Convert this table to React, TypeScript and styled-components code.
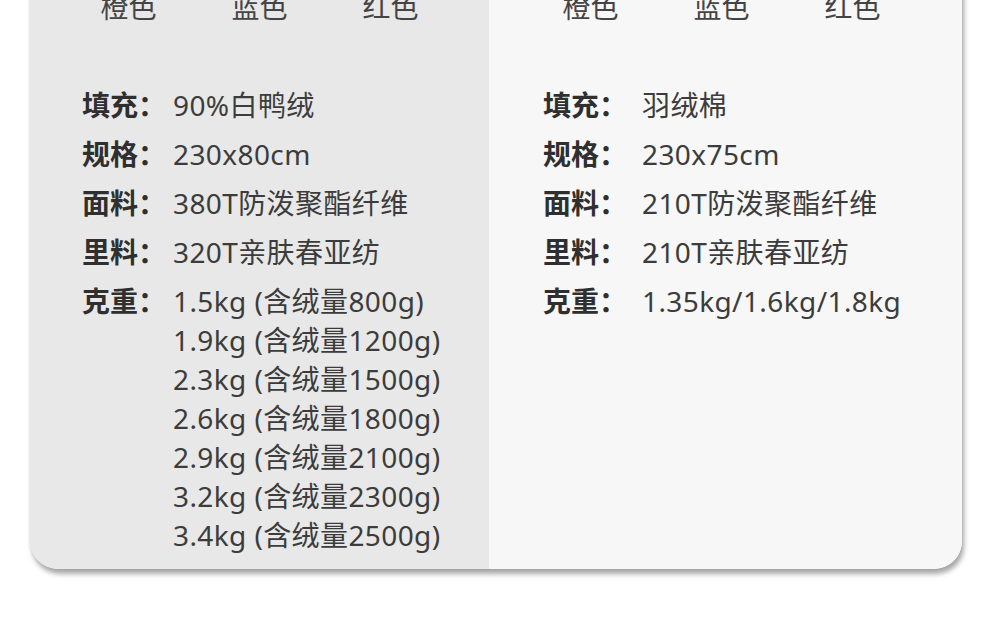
import React from "react";
import styled, { createGlobalStyle } from "styled-components";

const Global = createGlobalStyle`
  html, body { margin: 0; padding: 0; background: #ffffff; }
  body {
    width: 990px; height: 625px; overflow: hidden;
    font-family: "Noto Sans", "Noto Sans CJK SC", sans-serif;
    color: #333;
  }
`;

const Page = styled.div`
  width: 990px;
  height: 625px;
  background: #fff;
  overflow: hidden;
`;

const Card = styled.div`
  margin: -40px 0 0 30px;
  width: 932px;
  display: grid;
  grid-template-columns: 459px 473px;
  border-radius: 28px;
  overflow: hidden;
  box-shadow: 2px 5px 5px rgba(0, 0, 0, 0.34), 0 0 3px rgba(0, 0, 0, 0.08);
`;

const Panel = styled.div<{ $tone: "dark" | "light"; $indent: number }>`
  background: ${(p) => (p.$tone === "dark" ? "#e8e8e8" : "#f7f7f7")};
  padding: 28px 0 14px ${(p) => p.$indent}px;
  display: flex;
  flex-direction: column;
`;

const Colors = styled.div<{ $shift: number }>`
  display: flex;
  justify-content: center;
  gap: 73px;
  margin-left: ${(p) => p.$shift}px;
  font-size: 28px;
  line-height: 39px;
  color: #444;
`;

const ColorName = styled.span`
  width: 58px;
  text-align: center;
  white-space: nowrap;
`;

const Specs = styled.div`
  margin-top: 59px;
  display: flex;
  flex-direction: column;
  gap: 10px;
`;

const Row = styled.div`
  display: flex;
  align-items: flex-start;
  font-size: 28px;
  line-height: 39px;
`;

const Label = styled.span<{ $w: number }>`
  flex: 0 0 ${(p) => p.$w}px;
  font-weight: 700;
  color: #2f2f2f;
  white-space: nowrap;
`;

const Value = styled.div`
  color: #3c3c3c;
  display: flex;
  flex-direction: column;
  white-space: nowrap;
  letter-spacing: 0.4px;
`;

type Spec = { label: string; values: string[] };

const left: Spec[] = [
  { label: "填充：", values: ["90%白鸭绒"] },
  { label: "规格：", values: ["230x80cm"] },
  { label: "面料：", values: ["380T防泼聚酯纤维"] },
  { label: "里料：", values: ["320T亲肤春亚纺"] },
  {
    label: "克重：",
    values: [
      "1.5kg (含绒量800g)",
      "1.9kg (含绒量1200g)",
      "2.3kg (含绒量1500g)",
      "2.6kg (含绒量1800g)",
      "2.9kg (含绒量2100g)",
      "3.2kg (含绒量2300g)",
      "3.4kg (含绒量2500g)",
    ],
  },
];

const right: Spec[] = [
  { label: "填充：", values: ["羽绒棉"] },
  { label: "规格：", values: ["230x75cm"] },
  { label: "面料：", values: ["210T防泼聚酯纤维"] },
  { label: "里料：", values: ["210T亲肤春亚纺"] },
  { label: "克重：", values: ["1.35kg/1.6kg/1.8kg"] },
];

const colorNames = ["橙色", "蓝色", "红色"];

function SpecPanel({
  tone,
  indent,
  labelWidth,
  shift,
  specs,
}: {
  tone: "dark" | "light";
  indent: number;
  labelWidth: number;
  shift: number;
  specs: Spec[];
}) {
  return (
    <Panel $tone={tone} $indent={indent}>
      <Colors $shift={shift}>
        {colorNames.map((c) => (
          <ColorName key={c}>{c}</ColorName>
        ))}
      </Colors>
      <Specs>
        {specs.map((s) => (
          <Row key={s.label}>
            <Label $w={labelWidth}>{s.label}</Label>
            <Value>
              {s.values.map((v) => (
                <span key={v}>{v}</span>
              ))}
            </Value>
          </Row>
        ))}
      </Specs>
    </Panel>
  );
}

export default function App() {
  return (
    <Page>
      <Global />
      <Card>
        <SpecPanel tone="dark" indent={52} labelWidth={91} shift={-52} specs={left} />
        <SpecPanel tone="light" indent={54} labelWidth={99} shift={-62} specs={right} />
      </Card>
    </Page>
  );
}
